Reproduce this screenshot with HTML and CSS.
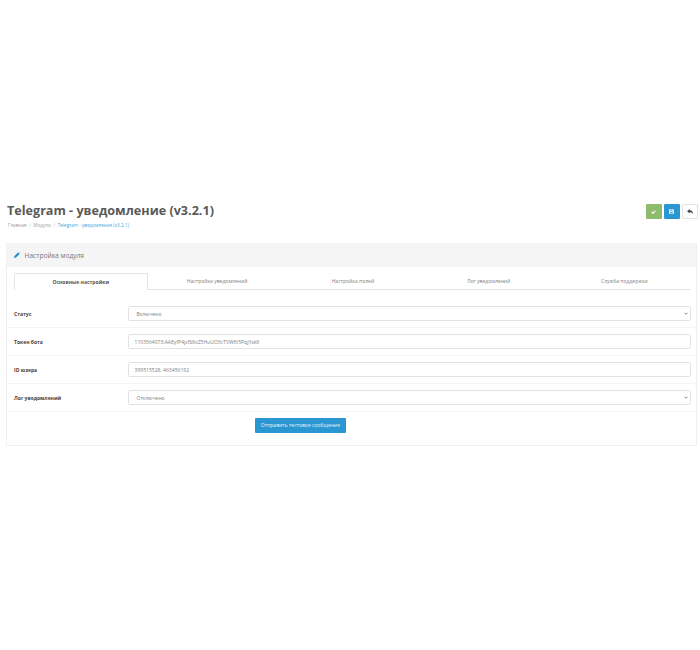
FILE: index.html
```html
<!DOCTYPE html>
<html lang="ru">
<head>
<meta charset="utf-8">
<title>Telegram - уведомление</title>
<link rel="stylesheet" href="styles.css">
</head>
<body>
<div class="page">
  <header class="page-header">
    <div class="titles">
      <h1>Telegram - уведомление (v3.2.1)</h1>
      <ul class="crumbs">
        <li>Главная</li>
        <li class="sep">/</li>
        <li>Модули</li>
        <li class="sep">/</li>
        <li class="current">Telegram - уведомление (v3.2.1)</li>
      </ul>
    </div>
    <div class="actions">
      <button class="btn-icon green"><svg width="5" height="4" viewBox="0 0 14 12"><path d="M1.500 6.500 5 10l7.500-8" fill="none" stroke="#fff" stroke-width="3.500"/></svg></button>
      <button class="btn-icon blue"><svg width="5" height="5" viewBox="0 0 12 12"><path d="M0 0h9.500L12 2.500V12H0z" fill="#d5e9f6"/><path d="M3 1h5v3H3zM3 7h6v4H3z" fill="#5ba8da"/></svg></button>
      <button class="btn-icon plain"><svg width="6" height="5" viewBox="0 0 14 12"><path d="M6 0v3c5 0 8 2.500 8 9-1.500-3.500-4-4.500-8-4.500V11L0 5.500z" fill="#444"/></svg></button>
    </div>
  </header>

  <section class="panel">
    <div class="panel-heading">
      <svg class="pencil" width="6" height="6" viewBox="0 0 12 12"><path d="M0 12l1-4 7-7 3 3-7 7zM9 0l3 3-.5.500-3-3z" fill="#1e91cf"/></svg>
      <span>Настройка модуля</span>
    </div>
    <div class="panel-body">
      <nav class="tabs">
        <div class="tab active">Основные настройки</div>
        <div class="tab">Настройка уведомлений</div>
        <div class="tab">Настройка полей</div>
        <div class="tab">Лог уведомлений</div>
        <div class="tab">Служба поддержки</div>
      </nav>
      <div class="form">
        <div class="row">
          <label>Статус</label>
          <div class="control select"><span>Включено</span><svg width="4" height="3" viewBox="0 0 10 8"><path d="M1 2l4 4 4-4" fill="none" stroke="#666" stroke-width="2"/></svg></div>
        </div>
        <div class="row">
          <label>Токен бота</label>
          <div class="control input"><span>1103564073:AAEyfP4jzfS8xZ5HuUO3cTVWf65PqjYsk8</span></div>
        </div>
        <div class="row">
          <label>ID юзера</label>
          <div class="control input"><span>399515528, 463456192</span></div>
        </div>
        <div class="row">
          <label>Лог уведомлений</label>
          <div class="control select"><span>Отключено</span><svg width="4" height="3" viewBox="0 0 10 8"><path d="M1 2l4 4 4-4" fill="none" stroke="#666" stroke-width="2"/></svg></div>
        </div>
        <div class="submit-row">
          <button class="send">Отправить тестовое сообщение</button>
        </div>
      </div>
    </div>
  </section>
</div>
</body>
</html>
```
FILE: styles.css
```css
* { box-sizing: border-box; }
html, body { margin: 0; padding: 0; background: #fff; }
body {
  width: 700px;
  height: 650px;
  overflow: hidden;
  font-family: "Open Sans", "Noto Sans", sans-serif;
  color: #777;
}
.page { padding: 203px 2px 0 6px; }
.page-header { display: flex; justify-content: space-between; align-items: flex-start; height: 40px; }
h1 {
  margin: 0 0 0 1px;
  font-size: 12.600px;
  line-height: 16px;
  font-weight: 700;
  color: #5a5a5a;
}
.crumbs {
  list-style: none;
  display: flex;
  gap: 2.600px;
  margin: 3px 0 0 2px;
  padding: 0;
  font-size: 4.650px;
  line-height: 7px;
  color: #a0a0a0;
}
.crumbs .current { color: #4aa5d8; }
.sep { color: #c4c4c4; }
.actions { display: flex; gap: 1.500px; padding-top: 1px; }
.btn-icon {
  width: 16.500px;
  height: 15px;
  padding: 0;
  border: 1px solid;
  border-radius: 1px;
  display: flex;
  align-items: center;
  justify-content: center;
}
.green { background: #8fbb6c; border-color: #8fbb6c; }
.blue { background: #2a96d2; border-color: #2a96d2; }
.plain { background: #fff; border-color: #e2e2e2; }
.panel { width: 691px; height: 203px; border: 1px solid #f0f0f0; border-top: 0; }
.panel-heading {
  height: 24px;
  background: #f5f5f5;
  display: flex;
  align-items: center;
  gap: 5px;
  padding-left: 6.500px;
  font-size: 6.650px;
  color: #777;
}
.panel-body { padding: 6px 5px 0 6.500px; }
.tabs { display: flex; height: 17px; border-bottom: 1px solid #e4e4e4; }
.tab {
  flex: 1 1 0;
  padding-left: 2.500px;
  text-align: center;
  font-size: 5.050px;
  line-height: 16px;
  color: #808080;
}
.tab.active {
  flex: 0 0 134.500px;
  padding-left: 0;
  background: #fff;
  border: 1px solid #e4e4e4;
  border-bottom: 0;
  border-radius: 1.500px 1.500px 0 0;
  height: 17px;
  font-weight: 700;
  color: #555;
}
.form { margin: 10px -5px 0 -6.500px; }
.row {
  display: flex;
  align-items: center;
  height: 28px;
  padding: 0 0 0 7px;
  border-bottom: 1px solid #f4f4f4;
}
.row label {
  width: 114px;
  font-size: 5.050px;
  font-weight: 700;
  color: #444;
}
.control {
  width: 563px;
  height: 15px;
  border: 1px solid #e2e2e2;
  border-radius: 1.500px;
  background: #fff;
  display: flex;
  align-items: center;
  justify-content: space-between;
  font-size: 5.050px;
  color: #808080;
  padding: 0 2px 0 5.500px;
}
.control.select span { padding-left: 2px; }
.submit-row { padding: 6px 0 0 248px; }
.send {
  display: block;
  width: 91px;
  height: 14.500px;
  padding: 0;
  background: #2a96d2;
  border: 0;
  border-radius: 1px;
  color: #e8f3fa;
  font-family: inherit;
  font-size: 5.050px;
}
```
